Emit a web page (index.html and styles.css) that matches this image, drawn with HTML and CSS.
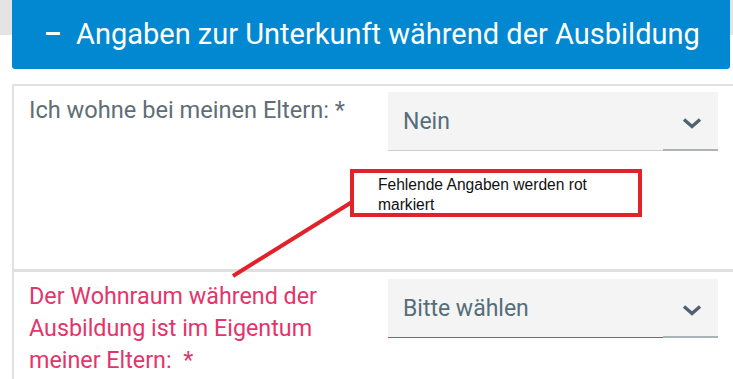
FILE: index.html
```html
<!DOCTYPE html>
<html lang="de">
<head>
<meta charset="utf-8">
<title>Angaben zur Unterkunft</title>
<link rel="stylesheet" href="styles.css">
</head>
<body>
<div class="page">
  <div class="panel-head">
    <span class="minus"></span>
    <span class="panel-title">Angaben zur Unterkunft während der Ausbildung</span>
  </div>
  <div class="card">
    <div class="row row-first">
      <div class="label">Ich wohne bei meinen Eltern: *</div>
      <div class="select select-ok">
        <span class="select-value">Nein</span>
        <svg class="chev" width="20" height="12" viewBox="0 0 20 12"><polyline points="2,2.5 10,9.5 18,2.5" fill="none" stroke="#4f6470" stroke-width="3.4"/></svg>
      </div>
    </div>
    <div class="row row-second">
      <div class="label label-error">Der Wohnraum während der<br>Ausbildung ist im Eigentum<br>meiner Eltern:&nbsp; *</div>
      <div class="select select-error">
        <span class="select-value">Bitte wählen</span>
        <svg class="chev" width="20" height="12" viewBox="0 0 20 12"><polyline points="2,2.5 10,9.5 18,2.5" fill="none" stroke="#4f6470" stroke-width="3.4"/></svg>
      </div>
    </div>
  </div>
</div>
<svg class="arrow" width="733" height="379" viewBox="0 0 733 379"><line x1="233" y1="276" x2="352" y2="202" stroke="#e2222b" stroke-width="4"/></svg>
<div class="note">Fehlende Angaben werden rot<br>markiert</div>
</body>
</html>
```
FILE: styles.css
```css
html, body {
  margin: 0;
  padding: 0;
}
body {
  width: 733px;
  height: 379px;
  overflow: hidden;
  font-family: Roboto, "Noto Sans", sans-serif;
  background: linear-gradient(#e4e4e4, #e4e4e4) top left / 100% 35px no-repeat, #ffffff;
  position: relative;
}
.page {
  display: flex;
  flex-direction: column;
}
.panel-head {
  margin: 0 3px 0 12px;
  height: 69px;
  background: #0288d1;
  border-radius: 0 0 3px 3px;
  display: flex;
  align-items: center;
  padding-left: 34px;
  gap: 16px;
  color: #ffffff;
}
.minus {
  width: 14px;
  height: 3px;
  background: #ffffff;
  margin-top: -3px;
}
.panel-title {
  font-size: 29px;
  line-height: 32px;
  margin-top: -1px;
}
.card {
  margin: 15px 0 0 12px;
  border-top: 2px solid #e0e0e0;
  border-left: 2px solid #e0e0e0;
}
.row {
  display: grid;
  grid-template-columns: 1fr 330px;
  padding-right: 15px;
}
.row-first {
  height: 183px;
  padding-top: 6px;
  box-sizing: border-box;
}
.row-second {
  border-top: 3px solid #e0e0e0;
  padding-top: 7px;
  height: 110px;
  box-sizing: border-box;
}
.label {
  padding-left: 15px;
  font-size: 23px;
  line-height: 32px;
  color: #5f6e76;
}
.row-first .label {
  margin-top: 2px;
  font-size: 23.6px;
}
.row-second .label {
  margin-top: 1px;
  font-size: 23.3px;
}
.label-error {
  color: #e2356b;
}
.select {
  height: 59px;
  box-sizing: border-box;
  display: flex;
  align-items: center;
  justify-content: space-between;
  padding: 0 16px 0 15px;
  font-size: 23px;
  color: #546e7a;
}
.select-ok {
  background:
    linear-gradient(#a9b3b8, #a9b3b8) right bottom / 55px 2px no-repeat,
    linear-gradient(#c9d0d3, #c9d0d3) left bottom / 100% 1px no-repeat,
    #f4f4f4;
}
.select-error {
  background:
    linear-gradient(#a9b3b8, #a9b3b8) right bottom / 55px 2px no-repeat,
    linear-gradient(#d9386a, #d9386a) left bottom / 100% 1px no-repeat,
    #f4f4f4;
}
.select-value {
  margin-top: -1px;
}
.chev {
  display: block;
  margin-top: 2px;
}
.arrow {
  position: absolute;
  left: 0;
  top: 0;
  pointer-events: none;
}
.note {
  position: absolute;
  left: 350px;
  top: 169px;
  width: 292px;
  height: 48px;
  box-sizing: border-box;
  border: 4px solid #e2222b;
  background: #ffffff;
  padding: 2px 0 0 24px;
  font-family: "Liberation Sans", Arial, sans-serif;
  font-size: 15.6px;
  line-height: 20px;
  color: #111111;
}
```
